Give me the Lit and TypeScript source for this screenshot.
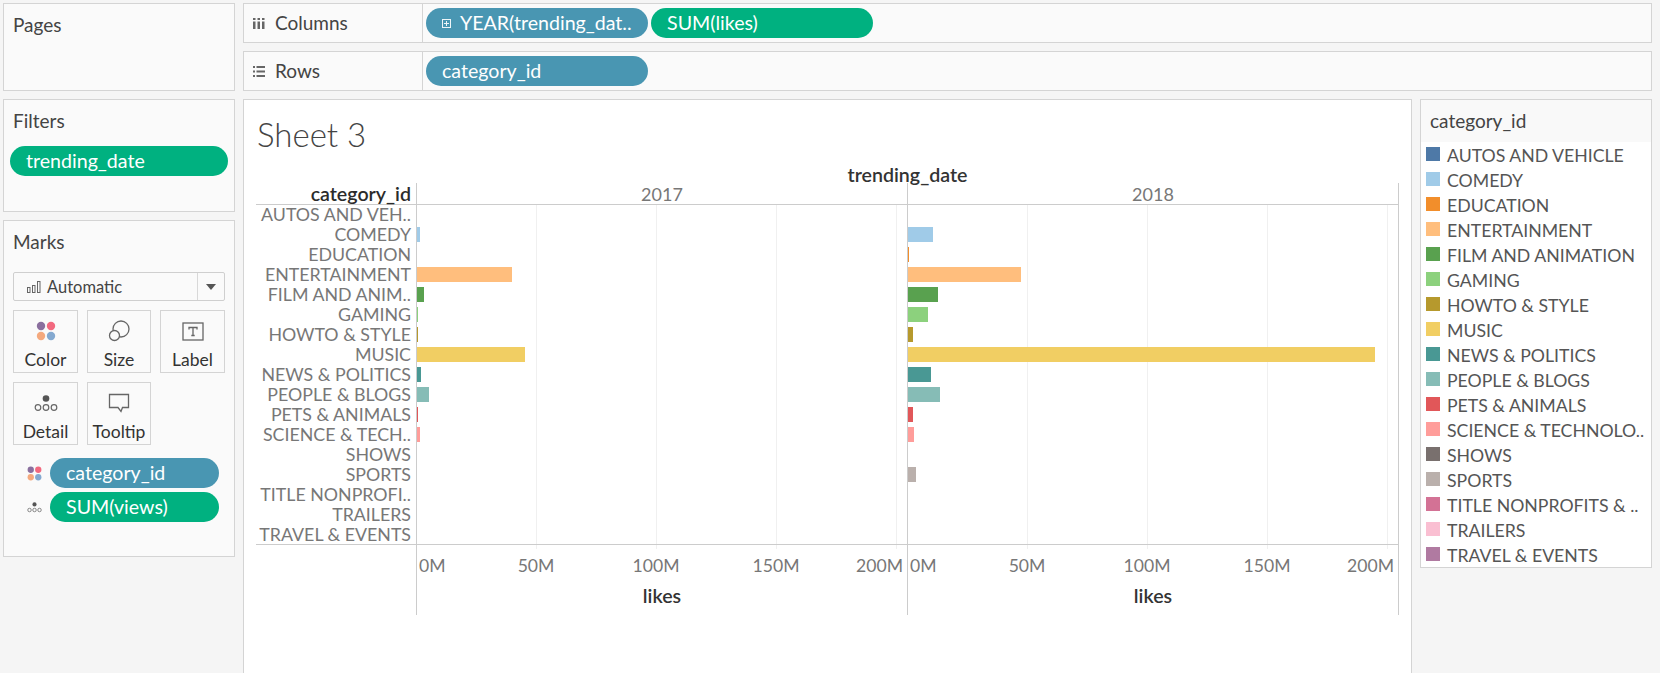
import { LitElement, html, css, svg } from "lit";
import { customElement } from "lit/decorators.js";

const C = {
  autos: "#4e79a7", comedy: "#a0cbe8", edu: "#f28e2b", ent: "#ffbe7d", film: "#59a14f", gaming: "#8cd17d",
  howto: "#b6992d", music: "#f1ce63", news: "#499894", people: "#86bcb6", pets: "#e15759", sci: "#ff9d9a",
  shows: "#79706e", sports: "#bab0ac", title: "#d37295", trailers: "#fabfd2", travel: "#b07aa1",
};
type Row = { axis: string; legend: string; c: string; a: number; b: number };
const rows: Row[] = [
  { axis: "AUTOS AND VEH..", legend: "AUTOS AND VEHICLE", c: C.autos, a: 0, b: 0 },
  { axis: "COMEDY", legend: "COMEDY", c: C.comedy, a: 3, b: 25 },
  { axis: "EDUCATION", legend: "EDUCATION", c: C.edu, a: 0, b: 1 },
  { axis: "ENTERTAINMENT", legend: "ENTERTAINMENT", c: C.ent, a: 95, b: 113 },
  { axis: "FILM AND ANIM..", legend: "FILM AND ANIMATION", c: C.film, a: 7, b: 30 },
  { axis: "GAMING", legend: "GAMING", c: C.gaming, a: 1, b: 20 },
  { axis: "HOWTO & STYLE", legend: "HOWTO & STYLE", c: C.howto, a: 1, b: 5 },
  { axis: "MUSIC", legend: "MUSIC", c: C.music, a: 108, b: 467 },
  { axis: "NEWS & POLITICS", legend: "NEWS & POLITICS", c: C.news, a: 4, b: 23 },
  { axis: "PEOPLE & BLOGS", legend: "PEOPLE & BLOGS", c: C.people, a: 12, b: 32 },
  { axis: "PETS & ANIMALS", legend: "PETS & ANIMALS", c: C.pets, a: 1, b: 5 },
  { axis: "SCIENCE & TECH..", legend: "SCIENCE & TECHNOLO..", c: C.sci, a: 3, b: 6 },
  { axis: "SHOWS", legend: "SHOWS", c: C.shows, a: 0, b: 0 },
  { axis: "SPORTS", legend: "SPORTS", c: C.sports, a: 0, b: 8 },
  { axis: "TITLE NONPROFI..", legend: "TITLE NONPROFITS & ..", c: C.title, a: 0, b: 0 },
  { axis: "TRAILERS", legend: "TRAILERS", c: C.trailers, a: 0, b: 0 },
  { axis: "TRAVEL & EVENTS", legend: "TRAVEL & EVENTS", c: C.travel, a: 0, b: 0 },
];

const dots = (s: number) => svg`<svg class="ic" width=${s} height=${s} viewBox="0 0 20 20">
  <circle cx="5" cy="5" r="4.2" fill="#8a6f9e"/><circle cx="15" cy="5" r="4.2" fill="#f2697f"/>
  <circle cx="5" cy="15" r="4.2" fill="#f4a97e"/><circle cx="15" cy="15" r="4.2" fill="#84a9d0"/></svg>`;
const detail = (w: number, h: number) => svg`<svg class="ic" width=${w} height=${h} viewBox="0 0 24 17">
  <circle cx="12" cy="3.500" r="3.300" fill="#555"/>
  <circle cx="4" cy="12.500" r="2.800" fill="none" stroke="#666" stroke-width="1.200"/>
  <circle cx="12" cy="12.500" r="2.800" fill="none" stroke="#666" stroke-width="1.200"/>
  <circle cx="20" cy="12.500" r="2.800" fill="none" stroke="#666" stroke-width="1.200"/></svg>`;

const GRID = [119, 239, 359, 479];
const TICKS = [
  { x: 2, t: "0M", z: true },
  { x: 119, t: "50M" },
  { x: 239, t: "100M" },
  { x: 359, t: "150M" },
  { x: 462.5, t: "200M" },
];

@customElement("app-root")
export class AppRoot extends LitElement {
  static styles = css`
    :host { display: block; width: 1660px; height: 673px; overflow: hidden; background: #f5f5f5;
      font-family: "Lato", "Open Sans", sans-serif; color: #333; }
    * { box-sizing: border-box; }
    .page { display: grid; grid-template-columns: 232px 1fr; gap: 0 8px; padding: 3px 0 0 3px; height: 673px; }
    .side { display: flex; flex-direction: column; gap: 8px; }
    .card { background: #fafafa; border: 1px solid #d4d4d4; padding: 11px 9px; }
    .card h3 { margin: 0; font-size: 19px; font-weight: 400; line-height: 20px; color: #444; }
    .pages { height: 88px; }
    .filters { height: 113px; }
    .filters h3 { margin-bottom: 15px; }
    .marks { height: 337px; }
    .pill { height: 30px; border-radius: 15px; color: #fff; font-size: 19.6px; line-height: 30px; padding-left: 16px;
      white-space: nowrap; overflow: hidden; }
    .blue { background: #4996b2; }
    .green { background: #00b180; }
    .fpill { width: 218px; margin-left: -3px; }
    .select { margin-top: 20px; height: 29px; width: 212px; border: 1px solid #cfcfcf; border-radius: 2px; display: flex;
      align-items: center; font-size: 16.5px; color: #444; background: #fafafa; }
    .select .val { flex: 1; display: flex; align-items: center; gap: 6px; padding-left: 13px; }
    .select .arr { width: 27px; height: 100%; border-left: 1px solid #d8d8d8; display: flex; align-items: center; justify-content: center; }
    .tri { width: 0; height: 0; border: 5px solid transparent; border-top: 6px solid #555; border-bottom: 0; }
    .btns { margin-top: 9px; display: grid; grid-template-columns: 65px 64px 65px; gap: 9px; }
    .btn { height: 63px; border: 1px solid #d4d4d4; display: flex; flex-direction: column; align-items: center;
      font-size: 17.5px; color: #333; background: #fafafa; padding-top: 8px; }
    .btn .icn { height: 24px; display: flex; align-items: center; justify-content: center; }
    .btn span { margin-top: 7px; line-height: 20px; }
    .ms { margin-top: 13px; display: flex; flex-direction: column; gap: 4px; }
    .mrow { display: flex; align-items: center; gap: 8px; padding-left: 14px; }
    .mrow .ico { width: 15px; display: flex; justify-content: center; }
    .mrow .pill { width: 169px; }
    .ic { display: block; }

    .main { display: flex; flex-direction: column; min-width: 0; }
    .shelf { height: 40px; width: 1409px; border: 1px solid #d4d4d4; background: #fafafa; display: flex; margin-bottom: 8px; }
    .shelf .lab { width: 179px; border-right: 1px solid #d4d4d4; display: flex; align-items: center; gap: 9px; padding: 0 0 2px 9px;
      font-size: 19px; color: #444; }
    .shelf .lab i { width: 13px; display: flex; padding-top: 2px; }
    .shelf .pills { display: flex; gap: 3px; padding: 4px 3px; }
    .shelf .pill { width: 222px; height: 30px; display: flex; align-items: center; gap: 9px; }
    .plus { width: 9px; height: 9px; border: 1px solid #fff; position: relative; flex: none; opacity: .9; }
    .plus::before { content: ""; position: absolute; left: 1px; right: 1px; top: 3px; height: 1px; background: #fff; }
    .plus::after { content: ""; position: absolute; top: 1px; bottom: 1px; left: 3px; width: 1px; background: #fff; }

    .body { display: flex; gap: 8px; flex: 1; min-height: 0; }
    .view { width: 1169px; background: #fff; border: 1px solid #d4d4d4; border-bottom: 0; padding: 0 0 0 12px; }
    .title { font-size: 33px; font-weight: 300; line-height: 40px; margin-top: 14px; color: #444; height: 47px; padding-left: 1px; }
    .chart { display: grid; grid-template-columns: 160px 491px 492px; width: 1143px; font-size: 17.8px; }
    .chead { height: 22px; padding-top: 3px; line-height: 21px; grid-column: 2 / 4; font-weight: 600; text-align: center; font-size: 19.6px; color: #333; }
    .colh { height: 22px; border-bottom: 1px solid #ccc; line-height: 22px; white-space: nowrap; }
    .colh.cat { text-align: right; padding-right: 5px; font-weight: 600; font-size: 19.6px; color: #2b2b2b; }
    .colh.yr { text-align: center; color: #777; border-left: 1px solid #ccc; font-size: 18px; }
    .colh.last { border-right: 1px solid #ccc; }
    .labs { display: flex; flex-direction: column; margin-top: -1px; }
    .labs div { height: 20px; line-height: 20px; text-align: right; padding-right: 5px; color: #777; white-space: nowrap; }
    .pane { position: relative; border-left: 1px solid #ccc; display: flex; flex-direction: column; }
    .pane.last { border-right: 1px solid #ccc; }
    .bar-row { height: 20px; padding-top: 2px; position: relative; }
    .bar { height: 15px; }
    .grid { position: absolute; top: 0; bottom: 0; width: 1px; background: #f0f0f0; }
    .bottom { height: 71px; margin-top: -1px; border-top: 1px solid #ccc; position: relative; }
    .axis { border-left: 1px solid #ccc; }
    .axis.last { border-right: 1px solid #ccc; }
    .tick { position: absolute; top: 10px; line-height: 22px; color: #777; transform: translateX(-50%); white-space: nowrap; font-size: 17.6px; }
    .tick0 { transform: none; }
    .tick-g { position: absolute; top: 0; width: 1px; height: 4px; background: #f0f0f0; }
    .axt { position: absolute; left: 0; right: 0; top: 40px; text-align: center; font-weight: 600; font-size: 19.6px; color: #333; line-height: 22px; }

    .legend { width: 232px; height: 469px; background: #fff; border: 1px solid #d4d4d4; }
    .legend header { height: 42px; background: #f9f9f9; padding: 10px 9px; font-size: 19px; line-height: 21px; color: #444; }
    .legend .items { padding-top: 1px; }
    .li { height: 25px; display: flex; align-items: flex-start; gap: 7px; padding-left: 5px; font-size: 17.7px; line-height: 25px; color: #555; white-space: nowrap; }
    .sw { width: 14px; height: 14px; margin-top: 4px; flex: none; }
  `;

  private axis(last: boolean) {
    return html`<div class="bottom axis ${last ? "last" : ""}">
      ${GRID.map((x) => html`<div class="tick-g" style="left:${x}px"></div>`)}
      ${TICKS.map((t) => html`<div class="tick ${t.z ? "tick0" : ""}" style="left:${t.x}px">${t.t}</div>`)}
      <div class="axt">likes</div>
    </div>`;
  }

  private pane(key: "a" | "b", last: boolean) {
    return html`<div class="pane ${last ? "last" : ""}">
      ${GRID.map((x) => html`<div class="grid" style="left:${x}px"></div>`)}
      ${rows.map((r) => html`<div class="bar-row">${r[key] ? html`<div class="bar" style="width:${r[key]}px;background:${r.c}"></div>` : ""}</div>`)}
    </div>`;
  }

  render() {
    return html`<div class="page">
      <div class="side">
        <div class="card pages"><h3>Pages</h3></div>
        <div class="card filters"><h3>Filters</h3>
          <div class="pill green fpill">trending_date</div></div>
        <div class="card marks"><h3>Marks</h3>
          <div class="select"><div class="val">
            <svg width="14" height="12" viewBox="0 0 14 12" fill="none" stroke="#666"><rect x=".5" y="6.5" width="2.5" height="5"/><rect x="5.5" y="4.5" width="2.5" height="7"/><rect x="10.5" y=".5" width="2.5" height="11"/></svg>
            Automatic</div><div class="arr"><div class="tri"></div></div></div>
          <div class="btns">
            <div class="btn"><div class="icn">${dots(20)}</div><span>Color</span></div>
            <div class="btn"><div class="icn"><svg width="22" height="22" viewBox="0 0 22 22" fill="none" stroke="#666" stroke-width="1.3"><circle cx="13" cy="9" r="8"/><circle cx="6.5" cy="15.5" r="5" fill="#fafafa"/></svg></div><span>Size</span></div>
            <div class="btn"><div class="icn"><svg width="22" height="19" viewBox="0 0 22 19" fill="none"><rect x="1" y="1" width="20" height="17" stroke="#666" stroke-width="1.3"/><path d="M7 7.5v-2h8v2M11 5.500v8M9.300 13.500h3.400" stroke="#666" stroke-width="1.3"/></svg></div><span>Label</span></div>
            <div class="btn"><div class="icn">${detail(24, 17)}</div><span>Detail</span></div>
            <div class="btn"><div class="icn"><svg width="22" height="20" viewBox="0 0 22 20" fill="none"><path d="M1.500 1.500h19v13h-6l-1.500 4-3-4h-8.500z" stroke="#666" stroke-width="1.3"/></svg></div><span>Tooltip</span></div>
          </div>
          <div class="ms">
            <div class="mrow"><div class="ico">${dots(15)}</div><div class="pill blue">category_id</div></div>
            <div class="mrow"><div class="ico">${detail(15, 11)}</div><div class="pill green">SUM(views)</div></div>
          </div>
        </div>
      </div>
      <div class="main">
        <div class="shelf"><div class="lab"><i><svg width="12" height="11" viewBox="0 0 12 11" fill="#666"><rect x="0" y="0" width="2.500" height="2"/><rect x="4.500" y="0" width="2.500" height="2"/><rect x="9" y="0" width="2.500" height="2"/><rect x="0" y="3.500" width="2.500" height="7.500"/><rect x="4.500" y="3.500" width="2.500" height="7.500"/><rect x="9" y="3.500" width="2.500" height="7.500"/></svg></i>Columns</div>
          <div class="pills"><div class="pill blue"><div class="plus"></div>YEAR(trending_dat..</div><div class="pill green">SUM(likes)</div></div></div>
        <div class="shelf"><div class="lab"><i><svg width="12" height="11" viewBox="0 0 12 11" fill="#666"><rect x="0" y="0" width="2" height="2"/><rect x="3.500" y="0" width="8.500" height="2"/><rect x="0" y="4.500" width="2" height="2"/><rect x="3.500" y="4.500" width="8.500" height="2"/><rect x="0" y="9" width="2" height="2"/><rect x="3.500" y="9" width="8.500" height="2"/></svg></i>Rows</div>
          <div class="pills"><div class="pill blue">category_id</div></div></div>
        <div class="body">
          <div class="view">
            <div class="title">Sheet 3</div>
            <div class="chart">
              <div></div><div class="chead">trending_date</div>
              <div class="colh cat">category_id</div><div class="colh yr">2017</div><div class="colh yr last">2018</div>
              <div class="labs">${rows.map((r) => html`<div>${r.axis}</div>`)}</div>
              ${this.pane("a", false)}
              ${this.pane("b", true)}
              <div class="bottom"></div>
              ${this.axis(false)}
              ${this.axis(true)}
            </div>
          </div>
          <div class="legend"><header>category_id</header>
            <div class="items">${rows.map((r) => html`<div class="li"><div class="sw" style="background:${r.c}"></div>${r.legend}</div>`)}</div>
          </div>
        </div>
      </div>
    </div>`;
  }
}
